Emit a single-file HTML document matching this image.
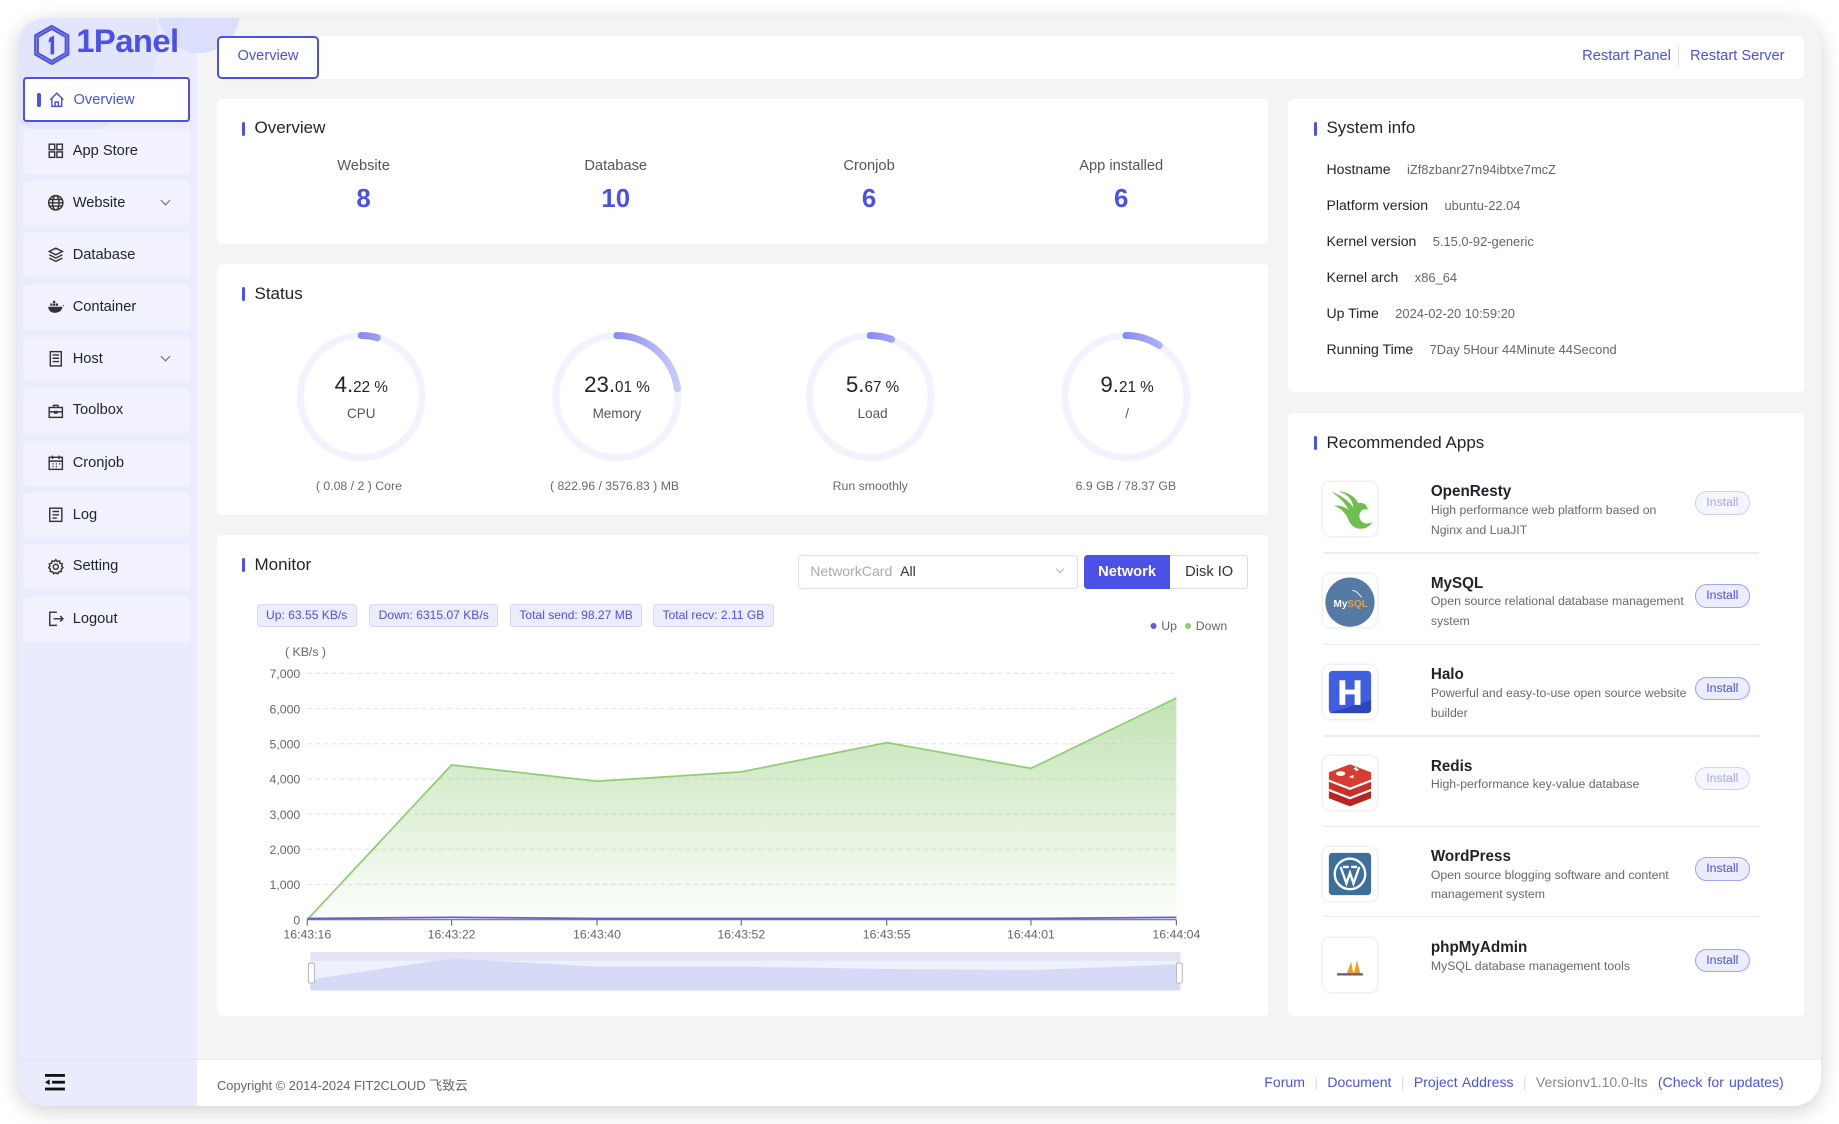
<!DOCTYPE html>
<html><head><meta charset="utf-8">
<style>
*{box-sizing:border-box;margin:0;padding:0}
html,body{width:1839px;height:1124px;overflow:hidden;background:#fff}
#z{zoom:1.17283;width:1568px;height:958px;position:relative;font-family:"Liberation Sans","Noto Sans CJK SC",sans-serif;color:#1f2329}
.a{position:absolute}
.win{left:15px;top:15px;width:1538px;height:928px;border-radius:24px;background:#f4f4f5;box-shadow:0 4px 18px rgba(0,0,0,.18);overflow:hidden}
.side{left:0;top:0;width:153px;height:928px;background:#eaebfc}
.card{background:#fff;border-radius:4px}
.nav{position:absolute;left:5px;width:142px;height:38px;background:#f1f2fd;border-radius:3px;font-size:12.5px;color:#1f2329;display:flex;align-items:center;padding-left:20px}
.nav svg{width:15px;height:15px;margin-right:7px;fill:none;stroke:#333;stroke-width:1.3}
.nav .ch{position:absolute;right:18px;top:14px;width:6px;height:6px;border-right:1px solid #666;border-bottom:1px solid #666;transform:rotate(45deg)}
.ttl{position:absolute;font-size:14.5px;color:#1f2329}
.ttl:before{content:"";position:absolute;left:-11px;top:3px;width:3px;height:12px;background:#4b50e6;border-radius:2px}
.lbl{position:absolute;font-size:12.5px;color:#555;text-align:center;width:200px}
.num{position:absolute;font-size:22px;font-weight:bold;color:#4b50e6;text-align:center;width:200px}
.g{position:absolute;width:120px;height:120px}
.gt{position:absolute;width:200px;text-align:center}
.tag{position:absolute;top:515px;height:20px;background:#ebedfc;border:1px solid #d4d8fa;border-radius:3px;font-size:10.3px;color:#4b50e6;line-height:18px;padding:0 7px}
.si{position:absolute;left:1131px;font-size:12px;color:#1f2329}
.si span{color:#666;font-size:11px;margin-left:14px}
.app{position:absolute;left:1128px;width:372px}
.ico{position:absolute;left:0;width:46px;height:46px;border-radius:6px;background:#fff;box-shadow:0 0 3px rgba(0,0,0,.15);overflow:hidden}
.an{position:absolute;left:92px;font-size:13px;font-weight:bold;color:#1f2329}
.ad{position:absolute;left:92px;font-size:10.5px;color:#646a73;line-height:17px;width:222px}
.btn{position:absolute;left:317px;width:47px;height:20px;border-radius:10px;border:1px solid #9ea3f2;background:#ebedfc;color:#4b50e6;font-size:10.5px;text-align:center;line-height:18px}
.btn.d{opacity:.5}
.sep{position:absolute;left:0;width:372px;height:1px;background:#ececf0}
.ft a{color:#4b50e6;text-decoration:none}
</style></head><body><div id="z">
<div class="a win">
 <div class="a side">
  <div class="a" style="left:-40px;top:-60px;width:160px;height:160px;border-radius:50%;background:#e3e5fb"></div>
  <div class="a" style="left:120px;top:-40px;width:70px;height:70px;border-radius:50%;background:#dcdffb"></div>
 </div>
</div>
<svg class="a" style="left:28px;top:21px" width="32" height="34" viewBox="0 0 32 34"><path d="M16 2 L29 9.5 V24.5 L16 32 L3 24.5 V9.5Z" fill="none" stroke="#4b50e6" stroke-width="4"/><path d="M16 2 L29 9.5 V24.5 L16 32 L3 24.5 V9.5Z" fill="none" stroke="#aab" stroke-width=".6"/><path d="M14 11 L18 9 V25 H15 V14 L13 15Z" fill="#4b50e6"/></svg>
<div class="a" style="left:65px;top:19px;font-size:28px;font-weight:bold;color:#4b50e6;letter-spacing:-.5px">1Panel</div>
<div class="nav" style="top:66px;left:20px;background:#fff;border:2px solid #4b50e6;color:#4b50e6;padding-left:10px"><span style="width:3px;height:12px;background:#4b50e6;border-radius:2px;margin-right:6px"></span><svg viewBox="0 0 16 16" style="stroke:#4b50e6"><path d="M2 8 L8 2 L14 8 M3.5 6.5 V14 H12.5 V6.5 M6.5 14 V10 H9.5 V14"/></svg>Overview</div>
<div class="nav" style="top:110px;left:20px"><svg viewBox="0 0 16 16"><rect x="2" y="2" width="5" height="5"/><rect x="9" y="2" width="5" height="5"/><rect x="2" y="9" width="5" height="5"/><rect x="9" y="9" width="5" height="5"/></svg>App Store</div>
<div class="nav" style="top:154px;left:20px"><svg viewBox="0 0 16 16"><circle cx="8" cy="8" r="6.5"/><ellipse cx="8" cy="8" rx="3" ry="6.5"/><path d="M1.5 8H14.5M2.5 5H13.5M2.5 11H13.5"/></svg>Website<i class="ch"></i></div>
<div class="nav" style="top:198px;left:20px"><svg viewBox="0 0 16 16"><path d="M8 2 L14 5 L8 8 L2 5Z M2 8 L8 11 L14 8 M2 11 L8 14 L14 11"/></svg>Database</div>
<div class="nav" style="top:243px;left:20px"><svg viewBox="0 0 16 16" style="fill:#333;stroke:none"><path d="M1 8 H14 C14 12 10 13.5 7 13.5 C3 13.5 1.5 11 1 8Z M3 5h2v2H3z M5.5 5h2v2h-2z M8 5h2v2H8z M5.5 2.5h2v2h-2z M14 7 C15 6 16 6.5 15.5 7.5Z"/></svg>Container</div>
<div class="nav" style="top:287px;left:20px"><svg viewBox="0 0 16 16"><rect x="3" y="1.5" width="10" height="13"/><path d="M5 4.5H11M5 7.5H11M5 10.5H11"/></svg>Host<i class="ch"></i></div>
<div class="nav" style="top:331px;left:20px"><svg viewBox="0 0 16 16"><rect x="2" y="5" width="12" height="9"/><path d="M6 5 V3 H10 V5 M2 9 H14 M7 8 V10 H9 V8"/></svg>Toolbox</div>
<div class="nav" style="top:376px;left:20px"><svg viewBox="0 0 16 16"><rect x="2" y="3" width="12" height="11"/><path d="M5 1.5V4.5M11 1.5V4.5M2 6.5H14M5 9h1M8 9h1M11 9h1M5 11.5h1M8 11.5h1"/></svg>Cronjob</div>
<div class="nav" style="top:420px;left:20px"><svg viewBox="0 0 16 16"><rect x="2.5" y="2" width="11" height="12"/><path d="M5 5H11M5 8H11M5 11H9"/></svg>Log</div>
<div class="nav" style="top:464px;left:20px"><svg viewBox="0 0 16 16"><circle cx="8" cy="8" r="2.3"/><path d="M8 1.5 L9.3 3.2 L11.4 2.6 L11.8 4.7 L13.9 5.3 L13.3 7.4 L14.5 8.8 L12.9 10.2 L13 12.3 L10.9 12.6 L9.8 14.4 L8 13.3 L6.2 14.4 L5.1 12.6 L3 12.3 L3.1 10.2 L1.5 8.8 L2.7 7.4 L2.1 5.3 L4.2 4.7 L4.6 2.6 L6.7 3.2Z"/></svg>Setting</div>
<div class="nav" style="top:509px;left:20px"><svg viewBox="0 0 16 16"><path d="M9 2H2.5V14H9M6 8H14.5M12 5.5 L14.5 8 L12 10.5"/></svg>Logout</div>
<svg class="a" style="left:38px;top:916px" width="17" height="14" viewBox="0 0 17 14"><rect x="0" y="0" width="17" height="2.4" fill="#111"/><rect x="6" y="5.8" width="11" height="2.4" fill="#111"/><rect x="0" y="11.6" width="17" height="2.4" fill="#111"/><path d="M0 7 L4 4.5 V9.5Z" fill="#111"/></svg>

<div class="a card" style="left:185px;top:31px;width:1353px;height:36px"></div>
<div class="a" style="left:185px;top:31px;width:87px;height:36px;border:2px solid #4b50e6;border-radius:4px;color:#4b50e6;font-size:12.5px;text-align:center;line-height:32px">Overview</div>
<div class="a" style="left:1349px;top:41px;font-size:12.5px;color:#4b50e6">Restart Panel</div>
<div class="a" style="left:1431px;top:39px;width:1px;height:18px;background:#ddd"></div>
<div class="a" style="left:1441px;top:41px;font-size:12.5px;color:#4b50e6">Restart Server</div>

<div class="a card" style="left:185px;top:84px;width:896px;height:124px"></div>
<div class="ttl" style="left:217px;top:101px">Overview</div>
<div class="lbl" style="left:210px;top:135px">Website</div><div class="num" style="left:210px;top:158px">8</div>
<div class="lbl" style="left:425px;top:135px">Database</div><div class="num" style="left:425px;top:158px">10</div>
<div class="lbl" style="left:641px;top:135px">Cronjob</div><div class="num" style="left:641px;top:158px">6</div>
<div class="lbl" style="left:856px;top:135px">App installed</div><div class="num" style="left:856px;top:158px">6</div>

<div class="a card" style="left:185px;top:225px;width:896px;height:214px"></div>
<div class="ttl" style="left:217px;top:242px">Status</div>
<svg class="a" style="left:185px;top:225px" width="896" height="214">
 <defs><linearGradient id="gg" x1="0" y1="0" x2="0" y2="1"><stop offset="0" stop-color="#4b50e6"/><stop offset="1" stop-color="#c9ccfa"/></linearGradient></defs>
 <g fill="none" stroke-width="6">
  <circle cx="123" cy="113" r="52" stroke="#f2f3fd"/>
  <circle cx="341" cy="113" r="52" stroke="#f2f3fd"/>
  <circle cx="557" cy="113" r="52" stroke="#f2f3fd"/>
  <circle cx="775" cy="113" r="52" stroke="#f2f3fd"/>
  <circle cx="123" cy="113" r="52" stroke="url(#gg)" stroke-linecap="round" stroke-dasharray="13.8 400" transform="rotate(-90 123 113)"/>
  <circle cx="341" cy="113" r="52" stroke="url(#gg)" stroke-linecap="round" stroke-dasharray="75 400" transform="rotate(-90 341 113)"/>
  <circle cx="557" cy="113" r="52" stroke="url(#gg)" stroke-linecap="round" stroke-dasharray="18.5 400" transform="rotate(-90 557 113)"/>
  <circle cx="775" cy="113" r="52" stroke="url(#gg)" stroke-linecap="round" stroke-dasharray="30 400" transform="rotate(-90 775 113)"/>
 </g>
</svg>
<div class="gt" style="left:208px;top:317px;font-size:19px">4.<span style="font-size:13px">22 %</span></div>
<div class="gt" style="left:208px;top:346px;font-size:11.5px;color:#555">CPU</div>
<div class="gt" style="left:206px;top:408px;font-size:10.5px;color:#646a73">( 0.08 / 2 ) Core</div>
<div class="gt" style="left:426px;top:317px;font-size:19px">23.<span style="font-size:13px">01 %</span></div>
<div class="gt" style="left:426px;top:346px;font-size:11.5px;color:#555">Memory</div>
<div class="gt" style="left:424px;top:408px;font-size:10.5px;color:#646a73">( 822.96 / 3576.83 ) MB</div>
<div class="gt" style="left:644px;top:317px;font-size:19px">5.<span style="font-size:13px">67 %</span></div>
<div class="gt" style="left:644px;top:346px;font-size:11.5px;color:#555">Load</div>
<div class="gt" style="left:642px;top:408px;font-size:10.5px;color:#646a73">Run smoothly</div>
<div class="gt" style="left:861px;top:317px;font-size:19px">9.<span style="font-size:13px">21 %</span></div>
<div class="gt" style="left:861px;top:346px;font-size:11.5px;color:#555">/</div>
<div class="gt" style="left:860px;top:408px;font-size:10.5px;color:#646a73">6.9 GB / 78.37 GB</div>

<div class="a card" style="left:185px;top:456px;width:896px;height:410px"></div>
<div class="ttl" style="left:217px;top:473px">Monitor</div>
<div class="a" style="left:680px;top:473px;width:239px;height:29px;border:1px solid #dcdfe6;border-radius:3px;font-size:12px;line-height:27px;padding-left:10px;color:#a8abb2">NetworkCard <span style="color:#333">&nbsp;All</span><i style="position:absolute;right:12px;top:9px;width:5px;height:5px;border-right:1px solid #aaa;border-bottom:1px solid #aaa;transform:rotate(45deg)"></i></div>
<div class="a" style="left:924px;top:473px;width:140px;height:29px;border:1px solid #dcdfe6;border-radius:3px"></div>
<div class="a" style="left:924px;top:473px;width:74px;height:29px;background:#4b50e6;border-radius:3px 0 0 3px;color:#fff;font-size:12.5px;font-weight:bold;text-align:center;line-height:29px">Network</div>
<div class="a" style="left:998px;top:473px;width:66px;height:29px;color:#333;font-size:12.5px;text-align:center;line-height:29px">Disk IO</div>
<div class="tag" style="left:219px">Up: 63.55 KB/s</div>
<div class="tag" style="left:315px">Down: 6315.07 KB/s</div>
<div class="tag" style="left:435px">Total send: 98.27 MB</div>
<div class="tag" style="left:557px">Total recv: 2.11 GB</div>
<div class="a" style="left:980px;top:526px;font-size:10.5px;color:#666"><span style="color:#5b61d3;font-size:12px">●</span> Up &nbsp;<span style="color:#91cc75;font-size:12px">●</span> Down</div>
<svg class="a" style="left:185px;top:456px" width="896" height="410" font-family="Liberation Sans" font-size="10.5" fill="#666">
 <defs><linearGradient id="ag" x1="0" y1="0" x2="0" y2="1"><stop offset="0" stop-color="#91cc75" stop-opacity=".55"/><stop offset="1" stop-color="#91cc75" stop-opacity=".03"/></linearGradient></defs>
 <text x="58" y="103">( KB/s )</text>
 <g stroke="#e6e6ee" stroke-dasharray="4 3">
  <line x1="77" y1="118" x2="818" y2="118"/><line x1="77" y1="148" x2="818" y2="148"/><line x1="77" y1="178" x2="818" y2="178"/><line x1="77" y1="208" x2="818" y2="208"/><line x1="77" y1="238" x2="818" y2="238"/><line x1="77" y1="268" x2="818" y2="268"/><line x1="77" y1="298" x2="818" y2="298"/>
 </g>
 <g text-anchor="end"><text x="71" y="122">7,000</text><text x="71" y="152">6,000</text><text x="71" y="182">5,000</text><text x="71" y="212">4,000</text><text x="71" y="242">3,000</text><text x="71" y="272">2,000</text><text x="71" y="302">1,000</text><text x="71" y="332">0</text></g>
 <path d="M77 328 L200 196 L324 210 L447 202 L571 177 L694 199 L818 139 V328Z" fill="url(#ag)"/>
 <path d="M77 328 L200 196 L324 210 L447 202 L571 177 L694 199 L818 139" fill="none" stroke="#91cc75" stroke-width="1.5"/>
 <path d="M77 327 L200 326 L324 327 L447 327 L571 327 L694 327 L818 326" fill="none" stroke="#5b61d3" stroke-width="1.5"/>
 <line x1="77" y1="328" x2="818" y2="328" stroke="#6e7079"/>
 <g stroke="#6e7079"><line x1="77" y1="328" x2="77" y2="333"/><line x1="200" y1="328" x2="200" y2="333"/><line x1="324" y1="328" x2="324" y2="333"/><line x1="447" y1="328" x2="447" y2="333"/><line x1="571" y1="328" x2="571" y2="333"/><line x1="694" y1="328" x2="694" y2="333"/><line x1="818" y1="328" x2="818" y2="333"/></g>
 <g text-anchor="middle"><text x="77" y="344">16:43:16</text><text x="200" y="344">16:43:22</text><text x="324" y="344">16:43:40</text><text x="447" y="344">16:43:52</text><text x="571" y="344">16:43:55</text><text x="694" y="344">16:44:01</text><text x="818" y="344">16:44:04</text></g>
 <rect x="80" y="356" width="741" height="32" fill="#eef0fd" stroke="#dfe2f5"/>
 <rect x="80" y="356" width="741" height="7" fill="#e2e4f3"/>
 <path d="M80 379 L200 361 L324 368 L447 368 L571 370 L694 371 L821 366 V388 H80Z" fill="#d6daf7"/>
 <rect x="78" y="365" width="5" height="17" rx="1" fill="#fff" stroke="#aaa" stroke-width=".7"/>
 <rect x="818" y="365" width="5" height="17" rx="1" fill="#fff" stroke="#aaa" stroke-width=".7"/>
</svg>

<div class="a card" style="left:1098px;top:84px;width:440px;height:250px"></div>
<div class="ttl" style="left:1131px;top:101px">System info</div>
<div class="si" style="top:137px">Hostname<span>iZf8zbanr27n94ibtxe7mcZ</span></div>
<div class="si" style="top:168px">Platform version<span>ubuntu-22.04</span></div>
<div class="si" style="top:199px">Kernel version<span>5.15.0-92-generic</span></div>
<div class="si" style="top:229px">Kernel arch<span>x86_64</span></div>
<div class="si" style="top:260px">Up Time<span>2024-02-20 10:59:20</span></div>
<div class="si" style="top:291px">Running Time<span>7Day 5Hour 44Minute 44Second</span></div>

<div class="a card" style="left:1098px;top:352px;width:440px;height:514px"></div>
<div class="ttl" style="left:1131px;top:369px">Recommended Apps</div>

<div class="app" style="top:411px">
 <div class="ico" style="top:0"><svg width="46" height="46" viewBox="0 0 46 46"><path d="M7 8 C16 12 22 16 26 22 C25 14 20 10 13 8 C20 8 27 12 30 18 C35 17 38 20 38 24 C35 22 31 24 31 30 C32 35 37 37 42 34 C38 42 26 42 22 33 C20 27 15 22 9 20 C15 20 19 21 22 24 C18 16 12 12 7 8Z" fill="#6fbf4e"/></svg></div>
 <div class="an" style="top:1px">OpenResty</div>
 <div class="ad" style="top:16px">High performance web platform based on Nginx and LuaJIT</div>
 <div class="btn d" style="top:8px">Install</div>
 <div class="sep" style="top:60px"></div>
</div>
<div class="app" style="top:489px">
 <div class="ico" style="top:0"><svg width="46" height="46" viewBox="0 0 46 46"><circle cx="23" cy="24" r="21" fill="#557aa3"/><text x="9" y="28" font-size="8.5" font-family="Liberation Sans" fill="#fff" font-weight="bold">My<tspan fill="#e8a040">SQL</tspan></text><path d="M25 14 C29 14 31 18 33 20" stroke="#fff" stroke-width=".8" fill="none"/></svg></div>
 <div class="an" style="top:1px">MySQL</div>
 <div class="ad" style="top:16px">Open source relational database management system</div>
 <div class="btn" style="top:9px">Install</div>
 <div class="sep" style="top:60px"></div>
</div>
<div class="app" style="top:567px">
 <div class="ico" style="top:0"><svg width="46" height="46" viewBox="0 0 46 46"><rect x="5" y="5" width="36" height="36" rx="3" fill="#3f5fe0"/><path d="M5 41 L41 30 V38 Q41 41 38 41Z" fill="#2f46b8"/><path d="M14 13h5v8h8v-8h5v21h-5v-9h-8v9h-5Z" fill="#fff"/></svg></div>
 <div class="an" style="top:1px">Halo</div>
 <div class="ad" style="top:16px">Powerful and easy-to-use open source website builder</div>
 <div class="btn" style="top:10px">Install</div>
 <div class="sep" style="top:60px"></div>
</div>
<div class="app" style="top:645px">
 <div class="ico" style="top:0"><svg width="46" height="46" viewBox="0 0 46 46"><path d="M5 30 L23 37 L41 30 V36 L23 43 L5 36Z" fill="#b7271e"/><path d="M5 22 L23 29 L41 22 V28 L23 35 L5 28Z" fill="#c8302a"/><path d="M5 14 L23 7 L41 14 V20 L23 27 L5 20Z" fill="#d83b2f"/><ellipse cx="15" cy="15" rx="4" ry="2" fill="#fff"/><path d="M26 11l2-2 1 2 2 0-2 2z" fill="#fff"/><path d="M22 18l4-2 0 3z" fill="#fff"/></svg></div>
 <div class="an" style="top:1px">Redis</div>
 <div class="ad" style="top:16px">High-performance key-value database</div>
 <div class="btn d" style="top:9px">Install</div>
 <div class="sep" style="top:59px"></div>
</div>
<div class="app" style="top:722px">
 <div class="ico" style="top:0"><svg width="46" height="46" viewBox="0 0 46 46"><rect x="5" y="5" width="36" height="36" rx="3" fill="#3d6f9b"/><circle cx="23" cy="23" r="13" fill="none" stroke="#fff" stroke-width="2"/><path d="M15 17 L20 31 L23 22 L26 31 L31 17 M17 17h5M24 17h5" fill="none" stroke="#fff" stroke-width="2"/></svg></div>
 <div class="an" style="top:1px">WordPress</div>
 <div class="ad" style="top:16px">Open source blogging software and content management system</div>
 <div class="btn" style="top:9px">Install</div>
 <div class="sep" style="top:59px"></div>
</div>
<div class="app" style="top:800px">
 <div class="ico" style="top:0"><svg width="46" height="46" viewBox="0 0 46 46"><path d="M20 31 L24 20 L26 31Z M26 31 L29 19 L32 31Z" fill="#f0a020"/><rect x="12" y="30" width="22" height="2" fill="#6b5a8c"/></svg></div>
 <div class="an" style="top:1px">phpMyAdmin</div>
 <div class="ad" style="top:16px">MySQL database management tools</div>
 <div class="btn" style="top:9px">Install</div>
</div>

<div class="a" style="left:168px;top:903px;width:1385px;height:40px;background:#fff;border-radius:0 0 24px 0;border-top:1px solid #ebebef"></div>
<div class="a" style="left:15px;top:903px;width:153px;height:1px;background:#e0e2f8"></div>
<div class="a" style="left:185px;top:917px;font-size:11px;color:#666">Copyright © 2014-2024 FIT2CLOUD 飞致云</div>
<div class="a ft" style="left:1078px;top:916px;font-size:12px;color:#888;white-space:nowrap;word-spacing:1px"><a>Forum</a><span style="color:#ddd;margin:0 8px">|</span><a>Document</a><span style="color:#ddd;margin:0 8px">|</span><a>Project Address</a><span style="color:#ddd;margin:0 8px">|</span>Versionv1.10.0-lts &nbsp;<a>(Check for updates)</a></div>
</div></body></html>
